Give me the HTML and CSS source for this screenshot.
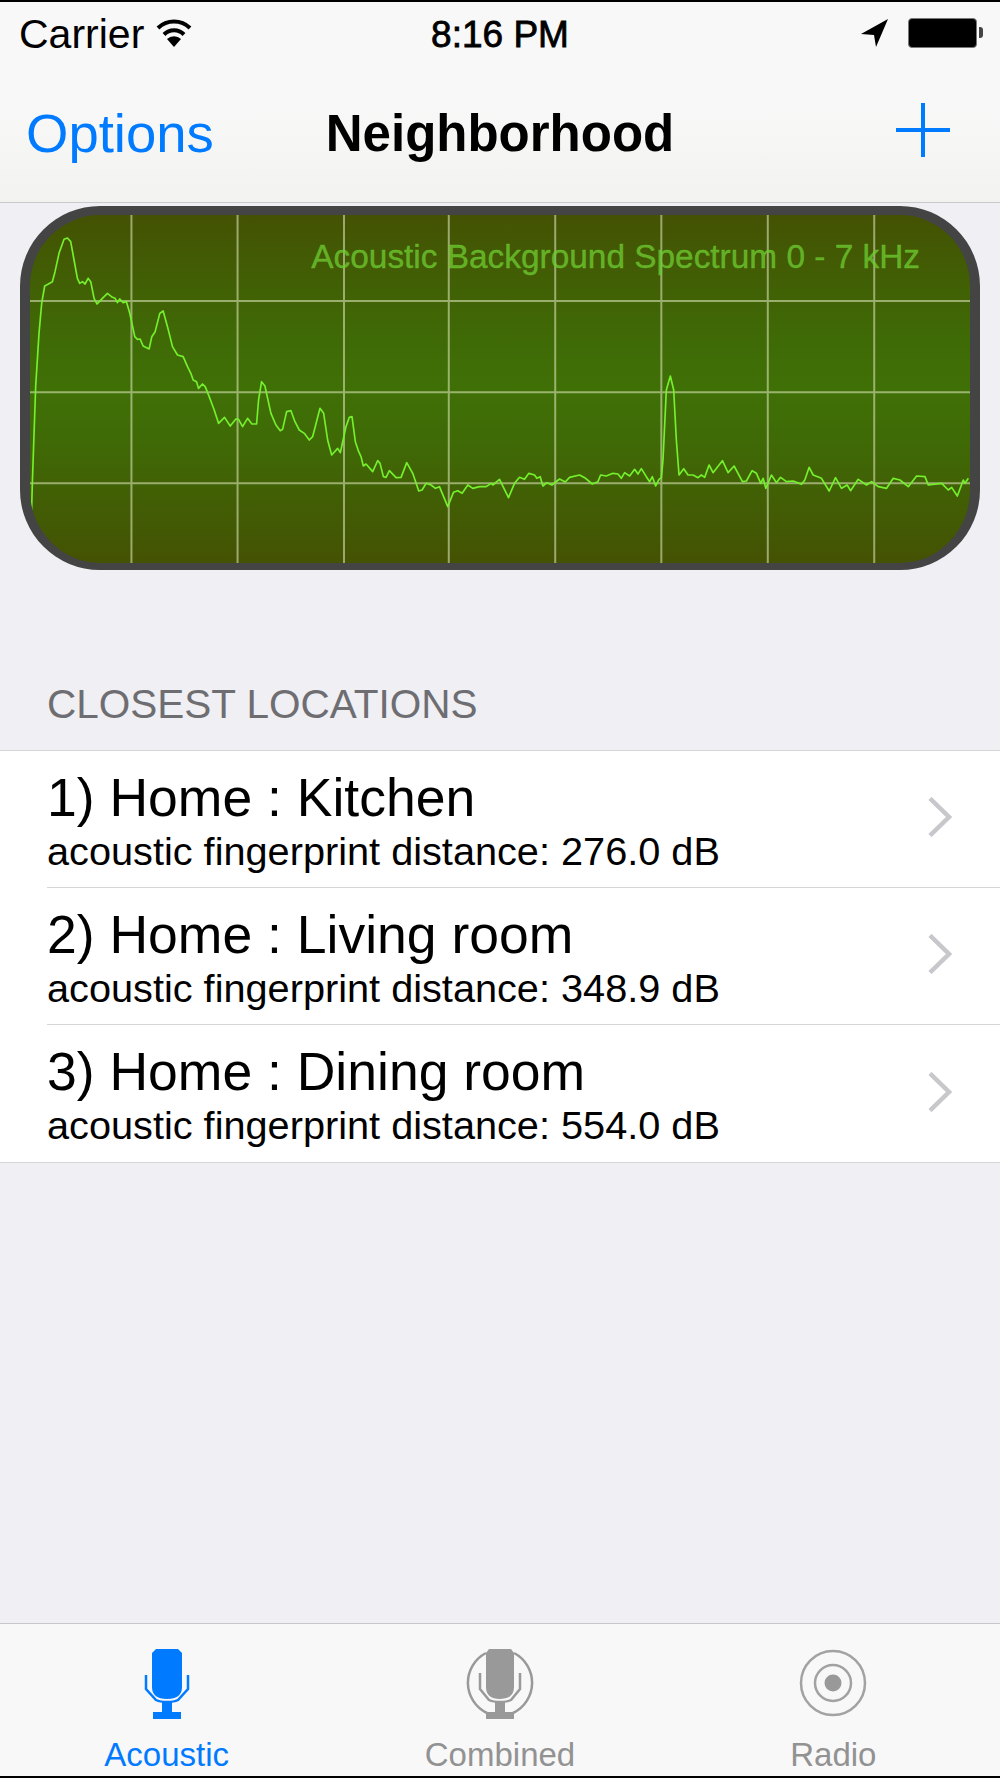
FILE: index.html
```html
<!DOCTYPE html>
<html>
<head>
  <title>Neighborhood</title>
  <meta name="viewport" content="width=device-width, initial-scale=1.0">
  <link rel="stylesheet" href="styles.css">
</head>
<body>
  <div class="screen">
    <header class="topbar">
      <div class="status">
        <div class="status-left">
          <span>Carrier</span>
          <svg class="wifi" width="36" height="30" viewBox="0 0 36 30">
            <path d="M2 11 A23 23 0 0 1 34 11" fill="none" stroke="#000" stroke-width="4"/>
            <path d="M8 17.5 A14 14 0 0 1 28 17.5" fill="none" stroke="#000" stroke-width="4"/>
            <path d="M11 22 A10 10 0 0 1 25 22 L18 30 Z" fill="#000"/>
          </svg>
        </div>
        <div class="time">8:16 PM</div>
        <div class="status-right">
          <svg width="27" height="28" viewBox="0 0 27 28"><polygon points="27,0 0,15 13,16 15,28" fill="#000"/></svg>
          <div class="battery"></div>
        </div>
      </div>
      <nav class="navbar">
        <a class="nav-left">Options</a>
        <h1>Neighborhood</h1>
        <div class="nav-right">
          <svg width="54" height="54" viewBox="0 0 54 54"><path d="M27 0V54M0 27H54" stroke="#007aff" stroke-width="4"/></svg>
        </div>
      </nav>
    </header>

    <section class="scope">
      <svg class="scope-plot" viewBox="93 45 2817 1044" preserveAspectRatio="none">
        <path class="grid" d="M397 45V1089M715 45V1089M1034 45V1089M1348 45V1089M1667 45V1089M1985 45V1089M2304 45V1089M2623 45V1089M93 303H2910M93 577H2910M93 850H2910"/>
        <polyline class="trace" points="95,1035 100,850 110,560 120,400 128,310 137,258 148,252 160,245 168,215 180,160 195,118 205,114 215,125 225,180 235,235 242,250 250,245 258,252 267,235 275,245 285,295 294,312 310,295 325,280 340,292 348,295 355,308 362,297 372,308 382,305 392,340 407,410 415,418 423,417 432,438 450,447 458,410 468,395 482,340 492,333 505,380 520,440 535,465 552,470 565,500 575,520 582,540 592,545 598,565 610,552 618,560 630,590 645,630 658,670 676,652 693,678 710,657 718,658 730,680 745,655 758,672 772,672 778,600 787,545 797,558 815,640 830,675 843,692 850,688 862,635 875,632 887,665 900,690 915,700 930,720 940,710 962,625 973,640 985,720 997,765 1015,745 1023,758 1040,680 1050,652 1058,650 1068,725 1078,755 1085,770 1092,798 1100,792 1120,815 1135,782 1142,790 1152,830 1160,832 1170,812 1190,833 1205,832 1222,788 1240,820 1258,873 1268,870 1280,850 1295,855 1308,865 1320,860 1345,920 1362,877 1375,872 1388,880 1405,855 1420,865 1440,860 1460,860 1475,850 1480,855 1500,838 1527,893 1545,850 1560,832 1575,838 1588,820 1605,825 1612,835 1622,830 1630,858 1642,848 1657,855 1680,837 1697,846 1710,832 1740,825 1758,835 1778,852 1795,845 1803,825 1820,828 1840,820 1855,822 1865,835 1875,818 1890,828 1905,808 1915,822 1925,806 1940,830 1950,845 1958,830 1968,858 1978,838 1985,833 1990,780 2000,570 2012,528 2022,570 2030,720 2038,825 2052,806 2065,825 2080,825 2095,833 2105,825 2115,832 2128,795 2140,818 2168,782 2185,818 2203,798 2228,845 2240,843 2257,812 2270,820 2283,850 2290,835 2298,865 2315,825 2330,848 2342,832 2360,845 2380,843 2405,853 2415,840 2428,802 2440,825 2465,835 2488,873 2507,833 2525,865 2542,855 2552,872 2575,838 2600,855 2615,845 2635,860 2660,865 2680,835 2700,840 2725,860 2750,828 2775,830 2785,855 2825,850 2845,870 2855,862 2872,888 2890,840 2895,850 2905,835"/>
      </svg>
      <div class="scope-label">Acoustic Background Spectrum 0 - 7 kHz</div>
    </section>

    <div class="section-title">CLOSEST LOCATIONS</div>

    <ul class="locations">
      <li class="location">
        <div class="location-text">
          <div class="location-name">1) Home : Kitchen</div>
          <div class="location-dist">acoustic fingerprint distance: 276.0 dB</div>
        </div>
        <svg class="chevron" width="24" height="40" viewBox="0 0 24 40"><path d="M2 1.5L21 20L2 38.5" fill="none" stroke="#c7c7cc" stroke-width="4.5"/></svg>
      </li>
      <li class="location">
        <div class="location-text">
          <div class="location-name">2) Home : Living room</div>
          <div class="location-dist">acoustic fingerprint distance: 348.9 dB</div>
        </div>
        <svg class="chevron" width="24" height="40" viewBox="0 0 24 40"><path d="M2 1.5L21 20L2 38.5" fill="none" stroke="#c7c7cc" stroke-width="4.5"/></svg>
      </li>
      <li class="location">
        <div class="location-text">
          <div class="location-name">3) Home : Dining room</div>
          <div class="location-dist">acoustic fingerprint distance: 554.0 dB</div>
        </div>
        <svg class="chevron" width="24" height="40" viewBox="0 0 24 40"><path d="M2 1.5L21 20L2 38.5" fill="none" stroke="#c7c7cc" stroke-width="4.5"/></svg>
      </li>
    </ul>

    <footer class="tabbar">
      <div class="tab active">
        <svg class="tab-icon" width="70" height="72" viewBox="0 0 70 72">
          <path d="M24 2H46L50 6V40Q50 52 35 52Q20 52 20 40V6Z" fill="#007aff"/>
          <path d="M14 28V42L24 53Q28 55 35 55Q42 55 46 53L56 42V28" fill="none" stroke="#007aff" stroke-width="2.5"/>
          <path d="M30 55H40V65H49V72H21V65H30Z" fill="#007aff"/>
        </svg>
        <span>Acoustic</span>
      </div>
      <div class="tab">
        <svg class="tab-icon" width="70" height="72" viewBox="0 0 70 72">
          <path d="M21 6A33.5 33.5 0 0 0 22 66M49 6A33.5 33.5 0 0 1 48 66" fill="none" stroke="#999" stroke-width="2.5"/>
          <path d="M24 2H46L49 6V40Q49 52 35 52Q21 52 21 40V6Z" fill="#999"/>
          <path d="M15 26V42L24 53Q28 55 35 55Q42 55 46 53L55 42V26" fill="none" stroke="#999" stroke-width="2.5"/>
          <path d="M30 55H40V65H49V72H21V65H30Z" fill="#999"/>
        </svg>
        <span>Combined</span>
      </div>
      <div class="tab">
        <svg class="tab-icon" width="70" height="72" viewBox="0 0 70 72">
          <circle cx="35" cy="36" r="32" fill="none" stroke="#a2a2a2" stroke-width="2.5"/>
          <circle cx="35" cy="36" r="18" fill="none" stroke="#a2a2a2" stroke-width="2.5"/>
          <circle cx="35" cy="36" r="8.5" fill="#999"/>
        </svg>
        <span>Radio</span>
      </div>
    </footer>
  </div>
</body>
</html>
```

FILE: styles.css
```css
* {
  box-sizing: border-box;
}
body {
  margin: 0;
  background: #efeff4;
  font-family: "Liberation Sans", Arial, sans-serif;
  color: #000;
}
.screen {
  width: 1000px;
  height: 1778px;
  display: flex;
  flex-direction: column;
  border-top: 2px solid #000;
  border-bottom: 2px solid #000;
  overflow: hidden;
}

/* status + nav */
.topbar {
  height: 201px;
  flex: none;
  background: linear-gradient(#f8f8f8 50%, #f2f3f0 100%);
  border-bottom: 1.5px solid #c8c7cc;
}
.status {
  height: 64px;
  padding: 2px 19px 0 19px;
  display: grid;
  grid-template-columns: 1fr auto 1fr;
  align-items: center;
  font-size: 37px;
}
.status-left {
  display: flex;
  align-items: center;
  gap: 12px;
  font-size: 41px;
  line-height: 44px;
}
.status-left span {
  margin-bottom: 2px;
}
.status-left svg {
  margin-bottom: 7px;
}
.status-right svg {
  margin-bottom: 4px;
}
.time {
  -webkit-text-stroke: 0.8px #000;
}
.status-right {
  display: flex;
  align-items: center;
  justify-content: flex-end;
  gap: 20px;
}
.battery {
  position: relative;
  width: 69px;
  height: 30px;
  background: #000;
  border: 1.5px solid #777;
  border-radius: 4px;
  margin: 0 4px 4px 0;
}
.battery::after {
  content: "";
  position: absolute;
  right: -7px;
  top: 8px;
  width: 4px;
  height: 11px;
  background: #444;
  border-radius: 0 3px 3px 0;
}
.navbar {
  height: 134px;
  padding: 0 26px;
  display: grid;
  grid-template-columns: 1fr auto 1fr;
  align-items: center;
}
.nav-left {
  color: #007aff;
  font-size: 54.5px;
}
.navbar h1 {
  margin: 0;
  font-size: 51px;
  font-weight: bold;
}
.nav-right {
  display: flex;
  justify-content: flex-end;
  margin: 0 24px 7px 0;
}

/* spectrum panel */
.scope {
  position: relative;
  flex: none;
  height: 364px;
  margin: 3px 20px 0 20px;
  border: 9px solid #444;
  border-width: 9px 10px 7px 10px;
  border-radius: 80px;
  overflow: hidden;
  background: linear-gradient(#445203 0%, #3f6a06 35%, #3f7006 50%, #3f6a06 65%, #445203 100%);
}
.scope-plot {
  display: block;
  width: 100%;
  height: 100%;
  filter: blur(0.4px);
}
.grid {
  fill: none;
  stroke: rgba(215, 225, 180, 0.6);
  stroke-width: 6;
}
.trace {
  fill: none;
  stroke: #74f02c;
  stroke-width: 5;
  stroke-linejoin: round;
}
.scope-label {
  position: absolute;
  top: 23px;
  right: 50px;
  font-size: 33.4px;
  color: rgba(110, 205, 50, 0.75);
  white-space: nowrap;
  -webkit-text-stroke: 0.4px rgba(110, 205, 50, 0.75);
}

/* list */
.section-title {
  flex: none;
  height: 180px;
  padding: 111px 0 0 47px;
  font-size: 40.5px;
  line-height: 46px;
  color: #6d6d72;
}
.locations {
  list-style: none;
  flex: none;
  margin: 0;
  padding: 0;
  background: #fff;
  border-top: 1.5px solid #d5d5d8;
  border-bottom: 1.5px solid #d5d5d8;
}
.location {
  height: 137px;
  margin-left: 47px;
  padding: 1px 48px 0 0;
  display: flex;
  justify-content: space-between;
  align-items: center;
  border-bottom: 1.5px solid #d5d5d8;
}
.location:last-child {
  border-bottom: none;
}
.location-name {
  font-size: 53.5px;
  line-height: 62px;
}
.location-dist {
  font-size: 39.7px;
  line-height: 44px;
}
.chevron {
  flex: none;
  margin-bottom: 5px;
}

/* tabs */
.tabbar {
  margin-top: auto;
  flex: none;
  height: 153px;
  background: #f8f8f8;
  border-top: 1.5px solid #c8c7cc;
  display: grid;
  grid-template-columns: repeat(3, 1fr);
}
.tab {
  display: flex;
  flex-direction: column;
  align-items: center;
  padding-top: 23px;
  color: #929292;
  font-size: 33px;
  line-height: 38px;
}
.tab.active {
  color: #007aff;
}
.tab-icon {
  display: block;
  margin-bottom: 17px;
  filter: blur(0.5px);
}
```
